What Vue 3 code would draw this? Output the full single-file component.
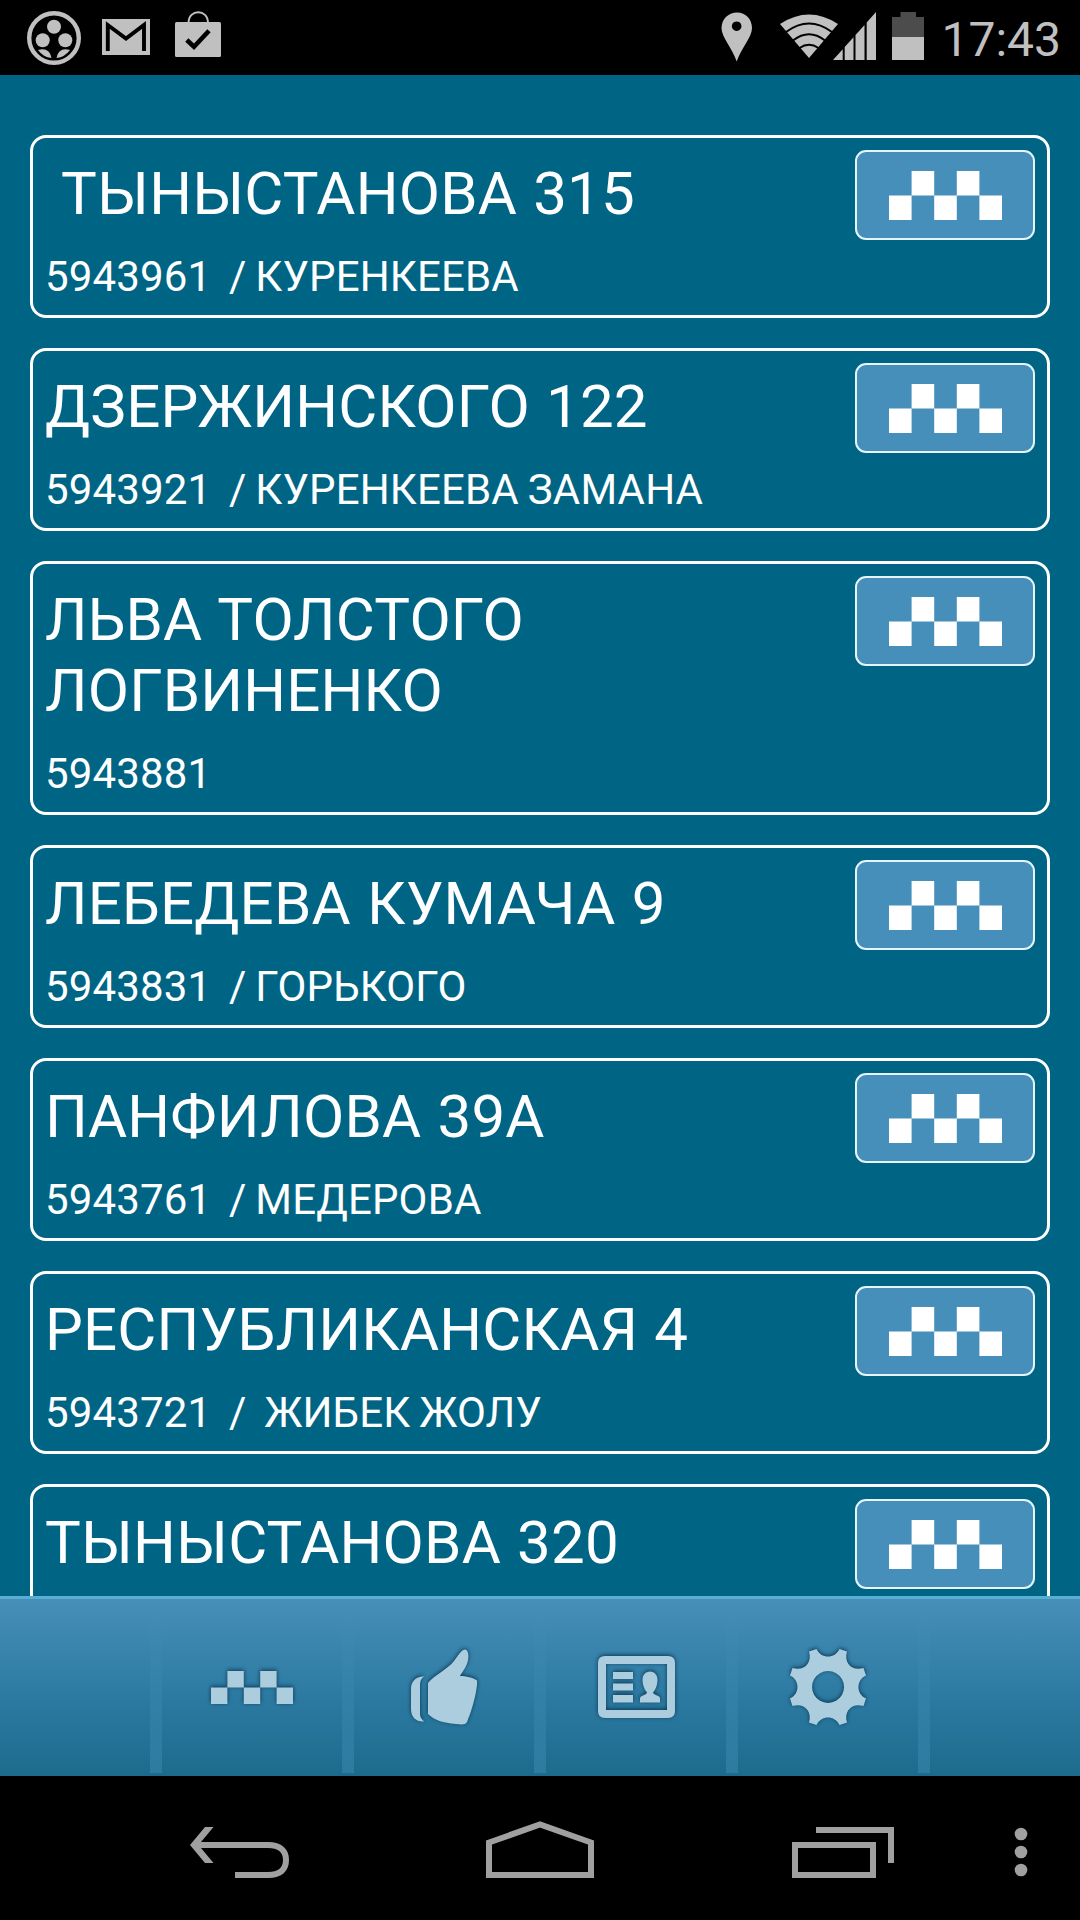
<script setup>
import { ref } from 'vue'

let id = 0

const time = ref('17:43')
const orders = ref([
  { id: id++, title: '\u00a0ТЫНЫСТАНОВА 315', info: '5943961\u00a0 / КУРЕНКЕЕВА' },
  { id: id++, title: 'ДЗЕРЖИНСКОГО 122', info: '5943921\u00a0 / КУРЕНКЕЕВА ЗАМАНА' },
  { id: id++, title: 'ЛЬВА ТОЛСТОГО ЛОГВИНЕНКО', info: '5943881' },
  { id: id++, title: 'ЛЕБЕДЕВА КУМАЧА 9', info: '5943831\u00a0 / ГОРЬКОГО' },
  { id: id++, title: 'ПАНФИЛОВА 39А', info: '5943761\u00a0 / МЕДЕРОВА' },
  { id: id++, title: 'РЕСПУБЛИКАНСКАЯ 4', info: '5943721\u00a0 /\u00a0 ЖИБЕК ЖОЛУ' },
  { id: id++, title: 'ТЫНЫСТАНОВА 320', info: '' }
])

const tabs = ['orders', 'rating', 'profile', 'settings']
const activeTab = ref('orders')
</script>

<template>
  <div class="screen">
    <header class="status">
      <div class="status-left">
        <svg class="reel" width="54" height="54" viewBox="0 0 54 54">
          <circle cx="27" cy="27" r="24.8" fill="none" stroke="#c0c0c0" stroke-width="4.4" />
          <g fill="#c0c0c0">
            <circle cx="27" cy="15.7" r="7" />
            <circle cx="15.7" cy="29.3" r="7" />
            <circle cx="38.3" cy="29.3" r="7" />
            <path d="M11 39 Q22.500 36 24.500 47 Q16 46 11 39Z" />
            <path d="M43 39 Q31.500 36 29.500 47 Q38 46 43 39Z" />
          </g>
        </svg>
        <svg class="mail" width="48" height="36" viewBox="0 0 48 36">
          <rect width="48" height="36" fill="#c0c0c0" />
          <path d="M5.800 32 V6 L24 19.500 L42 6 V32" fill="none" stroke="#000" stroke-width="3.900" />
        </svg>
        <svg width="46" height="46" viewBox="0 0 46 46">
          <path d="M13.500 12 C13.500 -2.500 33 -2.500 33 12" fill="none" stroke="#c0c0c0" stroke-width="2" />
          <rect y="11" width="46" height="35" rx="1.500" fill="#c0c0c0" />
          <path d="M11.800 29 L19 35.700 L34 19.700" fill="none" stroke="#000" stroke-width="4.600" />
        </svg>
      </div>
      <div class="status-right">
        <svg class="pin" width="32" height="50" viewBox="0 0 32 50">
          <path fill="#c0c0c0" fill-rule="evenodd" d="M16 0.500 C7 0.500 0.500 7.500 0.500 16 C0.500 25 11 36 15.700 49.500 C20.500 36 31 25 31 16 C31 7.500 25 0.500 16 0.500Z M15.700 9.400 A4.800 4.800 0 1 1 15.600 9.400Z" />
        </svg>
        <svg class="wifi" width="58" height="44" viewBox="0 0 58 44">
          <path fill="#c0c0c0" d="M0 10 Q29 -9 58 10 L29 44Z" />
          <g fill="none" stroke="#000" stroke-width="2">
            <path d="M6 18 Q29 1 52 18" />
            <path d="M13 26.500 Q29 14 45 26.500" />
            <path d="M19.500 34 Q29 27.500 38.500 34" />
          </g>
        </svg>
        <svg class="signal" width="43" height="48" viewBox="0 0 43 48">
          <path fill="#c0c0c0" d="M0 48 L9.700 37.200 V48Z M11.700 35 L20.500 25.200 V48 H11.700Z M22.500 23 L31.500 13 V48 H22.500Z M33.700 10.500 L43 0 V48 H33.700Z" />
        </svg>
        <svg class="battery" width="32" height="48" viewBox="0 0 32 48">
          <path fill="#4c4c4c" d="M0 5 H8.500 V0 H24 V5 H32 V25 H0Z" />
          <rect y="25" width="32" height="23" fill="#c0c0c0" />
        </svg>
        <span class="time">{{ time }}</span>
      </div>
    </header>

    <main class="list">
      <article v-for="order in orders" :key="order.id" class="card">
        <div class="card-text">
          <h2>{{ order.title }}</h2>
          <p>{{ order.info }}</p>
        </div>
        <button class="taxi">
          <svg width="113" height="49" viewBox="0 0 113 49">
            <path fill="#fff" d="M0 24.500h22.600v24.500h-22.600z M22.600 0h22.600v24.500h-22.600z M45.200 24.500h22.600v24.500h-22.600z M67.800 0h22.600v24.500h-22.600z M90.400 24.500h22.600v24.500h-22.600z" />
          </svg>
        </button>
      </article>
    </main>

    <nav class="tabs">
      <button v-for="tab in tabs" :key="tab" class="tab" @click="activeTab = tab">
        <svg v-if="tab === 'orders'" width="82" height="33" viewBox="0 0 82 33">
          <path d="M0 16.500h16.400v16.500h-16.400z M16.400 0h16.400v16.500h-16.400z M32.800 16.500h16.400v16.500h-16.400z M49.200 0h16.400v16.500h-16.400z M65.600 16.500h16.400v16.500h-16.400z" />
        </svg>
        <svg v-else-if="tab === 'rating'" width="66" height="76" viewBox="0 0 66 76">
          <path d="M13 27.500 C4 27.500 0 33 0 40 V60 C0 68 5 73 13 72.500 C10 70 9 67.500 9 64 V37 C9 32 10 30 13 27.500Z" />
          <path d="M17 34 C23 26 36 21 43 12 C49 4 51 0.500 54 0.500 C57 0.500 58 6 57 11 C56 17 52 22 49 27 C55 27 62 28.500 66 31.500 C67 39 61 62 56 73 C54 76 51 75.500 45 75 C32 74 23 71 17 65Z" />
        </svg>
        <svg v-else-if="tab === 'profile'" width="77" height="62" viewBox="0 0 77 62">
          <path fill-rule="evenodd" d="M7 0H70Q77 0 77 7V55Q77 62 70 62H7Q0 62 0 55V7Q0 0 7 0Z M8 8V54H69V8Z" />
          <path d="M15 16h20v7h-20z M15 27.500h20v7h-20z M15 39h20v7.500h-20z" />
          <path d="M42 46.500 V42 C43 39 48 39.500 49 36.500 C46 33 44.500 28 44.500 24 C44.500 19 47.500 15.500 52 15.500 C56.500 15.500 59.500 19 59.500 24 C59.500 28 58 33 55 36.500 C56 39.500 61 39 62 42 V46.500Z" />
        </svg>
        <svg v-else width="76" height="76" viewBox="-38 -38 76 76">
          <path fill-rule="evenodd" d="M-19 -35.500 L-11.500 -38 C-7 -28 7 -28 11.500 -38 L19 -35.500 C15.500 -24 24 -15.500 35.500 -19 L38 -11.500 C28 -7 28 7 38 11.500 L35.500 19 C24 15.500 15.500 24 19 35.500 L11.500 38 C7 28 -7 28 -11.500 38 L-19 35.500 C-15.500 24 -24 15.500 -35.500 19 L-38 11.500 C-28 7 -28 -7 -38 -11.500 L-35.500 -19 C-24 -15.500 -15.500 -24 -19 -35.500Z M0 -16 A16 16 0 1 0 0.100 -16Z" />
        </svg>
      </button>
    </nav>

    <footer class="system">
      <svg class="back" width="100" height="52" viewBox="0 0 100 52">
        <path fill="#a0a0a0" d="M15 0H23.500L11 15H78C92 15 99 22 99 33C99 44 92 51 78 51H45V45H78C88 45 93 41 93 33C93 25 88 21 78 21H11L23.500 36H15L0 18Z" />
      </svg>
      <svg class="home" width="108" height="57" viewBox="0 0 108 57">
        <path d="M3 54V21.500L54 3.500L105 21.500V54Z" fill="none" stroke="#a0a0a0" stroke-width="6" />
      </svg>
      <svg class="recent" width="102" height="51" viewBox="0 0 102 51">
        <path d="M24 3H99V36 M3 18H81V48H3Z" fill="none" stroke="#a0a0a0" stroke-width="6" />
      </svg>
      <svg class="more" width="14" height="50" viewBox="0 0 14 50">
        <g fill="#a0a0a0">
          <circle cx="7" cy="7" r="6.300" />
          <circle cx="7" cy="25" r="6.300" />
          <circle cx="7" cy="43" r="6.300" />
        </g>
      </svg>
    </footer>
  </div>
</template>

<style>
body {
  margin: 0;
  background: #000;
}
</style>

<style scoped>
.screen {
  width: 1080px;
  height: 1920px;
  display: flex;
  flex-direction: column;
  overflow: hidden;
  background: #006585;
  font-family: Roboto, 'Noto Sans', sans-serif;
}

svg {
  display: block;
  flex: none;
}

button {
  padding: 0;
  cursor: pointer;
}

.status {
  height: 75px;
  flex: none;
  box-sizing: border-box;
  padding: 0 19px 0 27px;
  display: flex;
  justify-content: space-between;
  background: #000;
}

.status-left,
.status-right {
  display: flex;
  align-items: flex-start;
}

.reel {
  margin: 11px 21px 0 0;
}

.mail {
  margin: 19px 25px 0 0;
}

.status-left svg:last-child {
  margin-top: 11px;
}

.pin {
  margin: 12px 27px 0 0;
}

.wifi {
  margin: 14px -5px 0 0;
}

.signal {
  margin: 12px 16px 0 0;
}

.battery {
  margin: 12px 17px 0 0;
}

.time {
  font-size: 48px;
  line-height: 56px;
  margin-top: 12px;
  color: #c0c0c0;
}

.list {
  flex: 1;
  min-height: 0;
  box-sizing: border-box;
  padding: 60px 30px 0;
  overflow: hidden;
}

.card {
  box-sizing: border-box;
  margin-bottom: 30px;
  padding: 12px 12px 8px;
  display: flex;
  align-items: flex-start;
  justify-content: space-between;
  border: 3px solid #fff;
  border-radius: 16px;
  color: #fff;
}

.card-text {
  width: 700px;
}

h2 {
  margin: 8px 0 17px;
  font-size: 60px;
  font-weight: 400;
  line-height: 71px;
  letter-spacing: 0.2px;
  word-spacing: 1px;
}

p {
  min-height: 61px;
  margin: 0;
  font-size: 42px;
  line-height: 61px;
  letter-spacing: 0.15px;
  word-spacing: -1.7px;
  white-space: nowrap;
}

.taxi {
  width: 180px;
  height: 90px;
  box-sizing: border-box;
  padding-top: 1px;
  display: flex;
  align-items: center;
  justify-content: center;
  background: #468fba;
  border: 2px solid #e6f4fa;
  border-radius: 11px;
}

.tabs {
  height: 180px;
  flex: none;
  box-sizing: border-box;
  padding-left: 150px;
  display: flex;
  border-top: 3px solid #59aed4;
  background: linear-gradient(#468fb9, #2c7aa2 55%, #1d6b8c);
}

.tab {
  width: 192px;
  height: 174px;
  box-sizing: border-box;
  padding: 2px 0 0 12px;
  display: flex;
  align-items: center;
  justify-content: center;
  border: 0;
  background: linear-gradient(rgba(72, 148, 190, 0), rgba(72, 148, 190, 0.4)) left / 12px 100% no-repeat;
}

.tab:last-child {
  width: 204px;
  padding-right: 12px;
  background:
    linear-gradient(rgba(72, 148, 190, 0), rgba(72, 148, 190, 0.4)) left / 12px 100% no-repeat,
    linear-gradient(rgba(72, 148, 190, 0), rgba(72, 148, 190, 0.4)) right / 12px 100% no-repeat;
}

.tab svg {
  overflow: visible;
  fill: #accddd;
  filter: drop-shadow(0 -1px 2px rgba(0, 35, 60, 0.8));
}

.system {
  height: 144px;
  flex: none;
  display: flex;
  align-items: flex-start;
  background: #000;
}

.back {
  margin: 51px 0 0 190px;
}

.home {
  margin: 45px 0 0 196px;
}

.recent {
  margin: 51px 0 0 198px;
}

.more {
  margin: 51px 0 0 120px;
}
</style>
